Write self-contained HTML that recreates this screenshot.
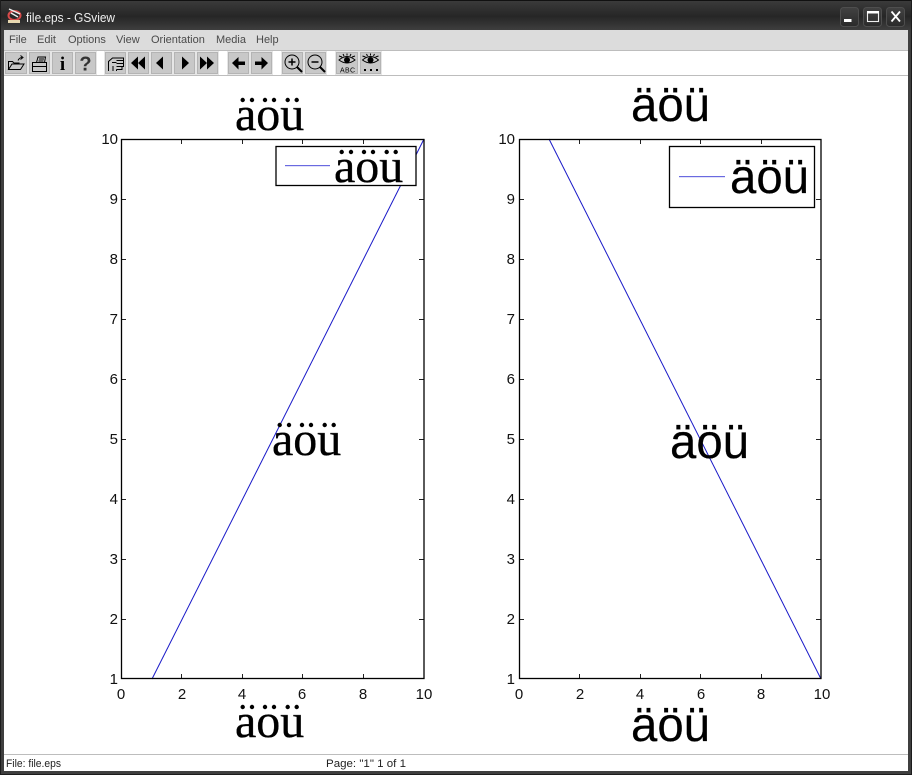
<!DOCTYPE html>
<html>
<head>
<meta charset="utf-8">
<style>
html,body{margin:0;padding:0;background:#fff;width:912px;height:775px;overflow:hidden}
svg{display:block}
text{font-family:"Liberation Sans",sans-serif}
.s{font-family:"Liberation Serif",serif;font-size:48px;fill:#000;stroke:#000;stroke-width:.35px}
.h{font-size:48px;fill:#000;stroke:#000;stroke-width:.2px}
.t{font-size:15px;fill:#111}
.m{font-size:11px;fill:#4a4a4a}
.st{font-size:11px;fill:#222}
.b{fill:#c8c8c8;stroke:#b4b4b4;stroke-width:1}
</style>
</head>
<body>
<svg width="912" height="775" viewBox="0 0 912 775" xmlns="http://www.w3.org/2000/svg">
<defs>
<linearGradient id="tb" x1="0" y1="0" x2="0" y2="1"><stop offset="0" stop-color="#3c3c3c"/><stop offset=".55" stop-color="#262626"/><stop offset="1" stop-color="#3e3e3e"/></linearGradient>
<linearGradient id="bt" x1="0" y1="0" x2="0" y2="1"><stop offset="0" stop-color="#424242"/><stop offset="1" stop-color="#2a2a2a"/></linearGradient>
<g id="dots" fill="#000"><circle cx="7.700" cy="-30" r="2.200"/><circle cx="17" cy="-30" r="2.200"/><circle cx="30" cy="-30" r="2.200"/><circle cx="39" cy="-30" r="2.200"/><circle cx="52.700" cy="-30" r="2.200"/><circle cx="61.700" cy="-30" r="2.200"/></g>
<clipPath id="c1"><rect x="225" y="106" width="90" height="30"/></clipPath>
<clipPath id="c2"><rect x="325" y="158" width="85" height="27"/></clipPath>
<clipPath id="c3"><rect x="262" y="431" width="90" height="30"/></clipPath>
<clipPath id="c4"><rect x="225" y="713" width="90" height="30"/></clipPath>
</defs>
<!-- frame -->
<rect width="912" height="775" fill="#3f3f3f"/>
<rect x="0" y="0" width="912" height="30" fill="url(#tb)"/>
<rect x="0" y="0" width="912" height="1" fill="#111"/>
<rect x="0" y="0" width="1" height="775" fill="#1c1c1c"/>
<rect x="911" y="0" width="1" height="775" fill="#1c1c1c"/>
<rect x="0" y="774" width="912" height="1" fill="#1c1c1c"/>
<rect x="4" y="30" width="904" height="741" fill="#fff"/>
<!-- title -->
<g>
<ellipse cx="14.500" cy="15.500" rx="6" ry="4.500" fill="none" stroke="#d84a4a" stroke-width="2"/>
<path d="M9 9l11 5M11 13l7 4" stroke="#eee" stroke-width="1.500"/>
<rect x="8" y="20" width="12" height="3" fill="#e8d8b0"/>
<text x="26" y="22" font-size="12.500" fill="#f0f0f0" textLength="89" lengthAdjust="spacingAndGlyphs">file.eps - GSview</text>
</g>
<!-- window buttons -->
<g stroke="#4e4e4e" fill="url(#bt)">
<rect x="840.500" y="7.500" width="18" height="19" rx="3"/>
<rect x="863.500" y="7.500" width="18" height="19" rx="3"/>
<rect x="886.500" y="7.500" width="18" height="19" rx="3"/>
</g>
<rect x="844" y="19" width="7.500" height="3" fill="#fff"/>
<rect x="867.500" y="12" width="11" height="9.500" fill="none" stroke="#eee" stroke-width="1.100"/>
<rect x="867" y="11" width="12" height="2.500" fill="#fff"/>
<path d="M891.500 11.500l8.500 10M900 11.500l-8.500 10" stroke="#fff" stroke-width="1.800" fill="none"/>
<!-- menu -->
<rect x="4" y="30" width="904" height="20" fill="#dcdcdc"/>
<rect x="4" y="50" width="904" height="1" fill="#bdbdbd"/>
<text class="m" x="9" y="43">File</text>
<text class="m" x="37" y="43">Edit</text>
<text class="m" x="68" y="43">Options</text>
<text class="m" x="116" y="43">View</text>
<text class="m" x="151" y="43">Orientation</text>
<text class="m" x="216" y="43">Media</text>
<text class="m" x="256" y="43">Help</text>
<!-- toolbar -->
<rect x="4" y="75" width="904" height="1" fill="#bdbdbd"/>
<g fill="#e6e6e6">
<rect x="4" y="51" width="93" height="24"/><rect x="104" y="51" width="115" height="24"/><rect x="227" y="51" width="46" height="24"/><rect x="281" y="51" width="46" height="24"/><rect x="335" y="51" width="47" height="24"/>
</g>
<g class="b">
<rect x="5.500" y="52.500" width="21" height="21"/><rect x="29.500" y="52.500" width="20" height="21"/><rect x="52.500" y="52.500" width="20" height="21"/><rect x="75.500" y="52.500" width="20" height="21"/>
<rect x="105.500" y="52.500" width="20" height="21"/><rect x="128.500" y="52.500" width="20" height="21"/><rect x="151.500" y="52.500" width="20" height="21"/><rect x="174.500" y="52.500" width="20" height="21"/><rect x="197.500" y="52.500" width="20" height="21"/>
<rect x="228.500" y="52.500" width="20" height="21"/><rect x="251.500" y="52.500" width="20" height="21"/>
<rect x="282.500" y="52.500" width="20" height="21"/><rect x="305.500" y="52.500" width="20" height="21"/>
<rect x="336.500" y="52.500" width="21" height="21"/><rect x="360.500" y="52.500" width="20" height="21"/>
</g>
<g fill="none" stroke="#000" stroke-width="1">
<!-- open -->
<path d="M8.500 69.500v-8h4l1.500 1.500h5v1.500M8.500 69.500h12l3.500-5.500h-12l-3.500 5.500z"/>
<path d="M18 60.500q1.500-3 4-3M20.500 55.500l2.500 2-2.500 2"/>
<!-- print -->
<path d="M36.500 62.500l1.500-5.500h7.500l-1 5.500M32.500 71.500h14v-9h-14zM32.500 66.500h14"/>
<path d="M39 59h5M38.500 61h5"/>
<!-- hand -->
<path d="M108.500 71v-9.500l4-3.500h11v2.500h-7M123.500 60.500v3h-7M123.500 63.500v3h-7M122 66.500v3h-5.500M116.500 69.500v1.500M112 62.500h4.500M113 71v-5"/>
<!-- zoom in -->
<circle cx="292" cy="62" r="7"/>
<path d="M288.500 62h7M292 58.500v7" stroke-width="1.500"/>
<path d="M297 67l5 5" stroke-width="2"/>
<!-- zoom out -->
<circle cx="315" cy="62" r="7"/>
<path d="M311.500 62h7" stroke-width="1.500"/>
<path d="M320 67l5 5" stroke-width="2"/>
<!-- eyes -->
<path d="M339 60q8-7 16 0q-8 6-16 0zM339 56l3 1M343 54l1 2M347 53.500v2M351 54l-1 2M355 56l-3 1"/>
<path d="M362.500 60q8-7 16 0q-8 6-16 0zM362.500 56l3 1M366.500 54l1 2M370.500 53.500v2M374.500 54l-1 2M378.500 56l-3 1"/>
</g>
<circle cx="347" cy="60" r="3" fill="#000"/>
<circle cx="370.500" cy="60" r="3" fill="#000"/>
<text x="340" y="72.500" font-size="7" fill="#000" textLength="15">ABC</text>
<rect x="364" y="69" width="2" height="2"/><rect x="370" y="69" width="2" height="2"/><rect x="376" y="69" width="2" height="2"/>
<text x="62.500" y="70" text-anchor="middle" style="font-family:'Liberation Serif',serif" font-weight="bold" font-size="19" fill="#000">i</text>
<text x="85.500" y="70.500" text-anchor="middle" font-weight="bold" font-size="20" fill="#333">?</text>
<g fill="#000">
<path d="M131 63l7-6.500v13zM138 63l7-6.500v13z"/>
<path d="M156 63l7-6.500v13z"/>
<path d="M182 56.500l7 6.500-7 6.500z"/>
<path d="M200 56.500l7 6.500-7 6.500zM207 56.500l7 6.500-7 6.500z"/>
<path d="M232 63l6.500-6v4.500h6.500v3.500h-6.500v4.500z"/>
<path d="M268 63l-6.500-6v4.500h-6.500v3.500h6.500v4.500z"/>
</g>
<!-- status -->
<rect x="4" y="754" width="904" height="1" fill="#bdbdbd"/>
<text class="st" x="6" y="767" textLength="55" lengthAdjust="spacingAndGlyphs">File: file.eps</text>
<text class="st" x="326" y="767" textLength="80" lengthAdjust="spacingAndGlyphs">Page: "1"  1 of 1</text>
<!-- ticks -->
<g fill="none" stroke="#222" stroke-width="1">
<path d="M181.500 139v5M242.500 139v5M302.500 139v5M363.500 139v5M181.500 679v-5M242.500 679v-5M302.500 679v-5M363.500 679v-5"/>
<path d="M121 199.500h5M121 259.500h5M121 319.500h5M121 379.500h5M121 439.500h5M121 499.500h5M121 559.500h5M121 619.500h5M424 199.500h-5M424 259.500h-5M424 319.500h-5M424 379.500h-5M424 439.500h-5M424 499.500h-5M424 559.500h-5M424 619.500h-5"/>
<path d="M579.500 139v5M640.500 139v5M700.500 139v5M761.500 139v5M579.500 679v-5M640.500 679v-5M700.500 679v-5M761.500 679v-5"/>
<path d="M519 199.500h5M519 259.500h5M519 319.500h5M519 379.500h5M519 439.500h5M519 499.500h5M519 559.500h5M519 619.500h5M821 199.500h-5M821 259.500h-5M821 319.500h-5M821 379.500h-5M821 439.500h-5M821 499.500h-5M821 559.500h-5M821 619.500h-5"/>
</g>
<path d="M152 679L424 139" stroke="#1a1ac8" stroke-width="1" fill="none"/>
<path d="M549 139L821 679" stroke="#1a1ac8" stroke-width="1" fill="none"/>
<rect x="121.500" y="139.500" width="302.500" height="539" fill="none" stroke="#000" stroke-width="1.300"/>
<rect x="519.500" y="139.500" width="301.500" height="539" fill="none" stroke="#000" stroke-width="1.300"/>
<!-- legends -->
<rect x="276" y="146.500" width="140" height="39" fill="#fff" stroke="#000" stroke-width="1.300"/>
<rect x="285" y="165" width="45" height="1.200" fill="#6a6ae0"/>
<rect x="669.500" y="146.500" width="145" height="61" fill="#fff" stroke="#000" stroke-width="1.300"/>
<rect x="679" y="176" width="46" height="1.200" fill="#6a6ae0"/>
<!-- serif labels: real text, upper marks replaced by round dots -->
<g clip-path="url(#c1)"><text class="s" x="235" y="130">äöü</text></g><use href="#dots" x="235" y="130"/>
<g clip-path="url(#c2)"><text class="s" x="334" y="182">äöü</text></g><use href="#dots" x="334" y="182"/>
<g clip-path="url(#c3)"><text class="s" x="272" y="455">äöü</text></g><use href="#dots" x="272" y="455"/>
<g clip-path="url(#c4)"><text class="s" x="235" y="737">äöü</text></g><use href="#dots" x="235" y="737"/>
<!-- sans labels -->
<text class="h" x="631" y="121" textLength="79" lengthAdjust="spacingAndGlyphs">äöü</text>
<text class="h" x="730" y="193" textLength="79" lengthAdjust="spacingAndGlyphs">äöü</text>
<text class="h" x="670" y="458" textLength="79" lengthAdjust="spacingAndGlyphs">äöü</text>
<text class="h" x="631" y="741" textLength="79" lengthAdjust="spacingAndGlyphs">äöü</text>
<!-- y ticks -->
<g text-anchor="end">
<text x="118" y="144" class="t">10</text><text x="118" y="204" class="t">9</text><text x="118" y="264" class="t">8</text><text x="118" y="324" class="t">7</text><text x="118" y="384" class="t">6</text><text x="118" y="444" class="t">5</text><text x="118" y="504" class="t">4</text><text x="118" y="564" class="t">3</text><text x="118" y="624" class="t">2</text><text x="118" y="684" class="t">1</text>
</g>
<g text-anchor="end">
<text x="515" y="144" class="t">10</text><text x="515" y="204" class="t">9</text><text x="515" y="264" class="t">8</text><text x="515" y="324" class="t">7</text><text x="515" y="384" class="t">6</text><text x="515" y="444" class="t">5</text><text x="515" y="504" class="t">4</text><text x="515" y="564" class="t">3</text><text x="515" y="624" class="t">2</text><text x="515" y="684" class="t">1</text>
</g>
<g text-anchor="middle">
<text x="121" y="699" class="t">0</text><text x="182" y="699" class="t">2</text><text x="242" y="699" class="t">4</text><text x="302" y="699" class="t">6</text><text x="363" y="699" class="t">8</text><text x="424" y="699" class="t">10</text>
<text x="519" y="699" class="t">0</text><text x="580" y="699" class="t">2</text><text x="640" y="699" class="t">4</text><text x="701" y="699" class="t">6</text><text x="761" y="699" class="t">8</text><text x="822" y="699" class="t">10</text>
</g>
</svg>
</body>
</html>
